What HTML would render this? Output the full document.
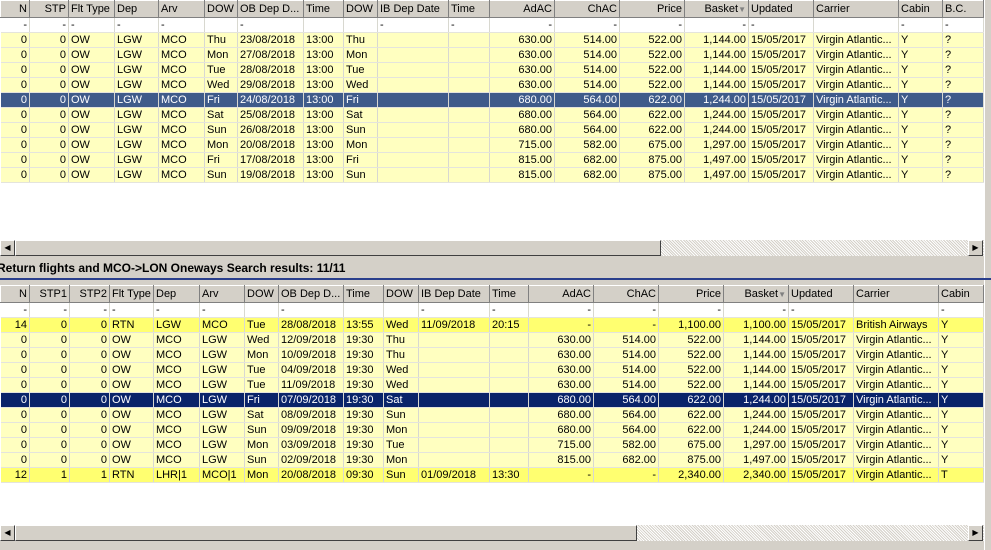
<!DOCTYPE html>
<html><head><meta charset="utf-8"><style>
*{margin:0;padding:0;box-sizing:border-box}
body{width:991px;height:550px;overflow:hidden;background:#d4d0c8;font-family:"Liberation Sans",sans-serif;font-size:11px;color:#000;position:relative}
.pane{position:absolute;left:0;width:984px;background:#fff;overflow:hidden}
table{border-collapse:collapse;table-layout:fixed;position:absolute;left:0;top:0}
td{height:15px;line-height:14px;padding:0 2px;white-space:nowrap;overflow:hidden;border-right:1px solid #d8d8d0;border-bottom:1px solid #e4e4dc}
tr.h td{height:17px;background:#d4d0c8;border-top:1px solid #fff;border-left:1px solid #fff;border-right:1px solid #808080;border-bottom:1px solid #808080;line-height:15px}
tr.f td{background:#fff}
tr.y td{background:#ffffc0}
tr.b td{background:#ffff70}
tr.s1 td{background:#3f5b8a;color:#fff}
tr.s2 td{background:#0a246a;color:#fff}
.r{text-align:right}
.sb{position:absolute;left:0;width:984px;height:16px;background-color:#e8e6e0;background-image:repeating-linear-gradient(45deg,#d4d0c8 0 1px,#fff 1px 2px)}
.btn{position:absolute;top:0;width:15px;height:16px;background:#d4d0c8;border-top:1px solid #fff;border-left:1px solid #fff;border-right:1px solid #404040;border-bottom:1px solid #404040;font-size:8px;line-height:14px;text-align:center}
.thumb{position:absolute;top:0;left:15px;height:16px;background:#d4d0c8;border-top:1px solid #fff;border-left:1px solid #fff;border-right:1px solid #404040;border-bottom:1px solid #404040}
.title{position:absolute;left:0;top:258px;width:991px;height:22px;font-weight:bold;font-size:12px;line-height:20px;padding-left:0;text-indent:-3px;border-bottom:2px solid #2a3f8c}
.edge{position:absolute;left:984px;top:0;width:7px;height:550px;background:#d4d0c8;border-left:1px solid #fff}
</style></head><body>
<div class="edge"></div>
<div class="pane" style="top:0;height:240px">
<table style="width:983px">
<colgroup><col style="width:29px"><col style="width:39px"><col style="width:46px"><col style="width:44px"><col style="width:46px"><col style="width:33px"><col style="width:66px"><col style="width:40px"><col style="width:34px"><col style="width:71px"><col style="width:41px"><col style="width:65px"><col style="width:65px"><col style="width:65px"><col style="width:64px"><col style="width:65px"><col style="width:85px"><col style="width:44px"><col style="width:41px"></colgroup>
<tr class="h"><td class="r">N</td><td class="r">STP</td><td>Flt Type</td><td>Dep</td><td>Arv</td><td>DOW</td><td>OB Dep D...</td><td>Time</td><td>DOW</td><td>IB Dep Date</td><td>Time</td><td class="r">AdAC</td><td class="r">ChAC</td><td class="r">Price</td><td class="r">Basket<span style="color:#808080;font-size:8px">▼</span></td><td>Updated</td><td>Carrier</td><td>Cabin</td><td>B.C.</td></tr>
<tr class="f"><td class="r">-</td><td class="r">-</td><td>-</td><td>-</td><td>-</td><td></td><td>-</td><td></td><td></td><td>-</td><td>-</td><td class="r">-</td><td class="r">-</td><td class="r">-</td><td class="r">-</td><td>-</td><td></td><td>-</td><td>-</td></tr>
<tr class="y"><td class="r">0</td><td class="r">0</td><td>OW</td><td>LGW</td><td>MCO</td><td>Thu</td><td>23/08/2018</td><td>13:00</td><td>Thu</td><td></td><td></td><td class="r">630.00</td><td class="r">514.00</td><td class="r">522.00</td><td class="r">1,144.00</td><td>15/05/2017</td><td>Virgin Atlantic...</td><td>Y</td><td>?</td></tr>
<tr class="y"><td class="r">0</td><td class="r">0</td><td>OW</td><td>LGW</td><td>MCO</td><td>Mon</td><td>27/08/2018</td><td>13:00</td><td>Mon</td><td></td><td></td><td class="r">630.00</td><td class="r">514.00</td><td class="r">522.00</td><td class="r">1,144.00</td><td>15/05/2017</td><td>Virgin Atlantic...</td><td>Y</td><td>?</td></tr>
<tr class="y"><td class="r">0</td><td class="r">0</td><td>OW</td><td>LGW</td><td>MCO</td><td>Tue</td><td>28/08/2018</td><td>13:00</td><td>Tue</td><td></td><td></td><td class="r">630.00</td><td class="r">514.00</td><td class="r">522.00</td><td class="r">1,144.00</td><td>15/05/2017</td><td>Virgin Atlantic...</td><td>Y</td><td>?</td></tr>
<tr class="y"><td class="r">0</td><td class="r">0</td><td>OW</td><td>LGW</td><td>MCO</td><td>Wed</td><td>29/08/2018</td><td>13:00</td><td>Wed</td><td></td><td></td><td class="r">630.00</td><td class="r">514.00</td><td class="r">522.00</td><td class="r">1,144.00</td><td>15/05/2017</td><td>Virgin Atlantic...</td><td>Y</td><td>?</td></tr>
<tr class="s1"><td class="r">0</td><td class="r">0</td><td>OW</td><td>LGW</td><td>MCO</td><td>Fri</td><td>24/08/2018</td><td>13:00</td><td>Fri</td><td></td><td></td><td class="r">680.00</td><td class="r">564.00</td><td class="r">622.00</td><td class="r">1,244.00</td><td>15/05/2017</td><td>Virgin Atlantic...</td><td>Y</td><td>?</td></tr>
<tr class="y"><td class="r">0</td><td class="r">0</td><td>OW</td><td>LGW</td><td>MCO</td><td>Sat</td><td>25/08/2018</td><td>13:00</td><td>Sat</td><td></td><td></td><td class="r">680.00</td><td class="r">564.00</td><td class="r">622.00</td><td class="r">1,244.00</td><td>15/05/2017</td><td>Virgin Atlantic...</td><td>Y</td><td>?</td></tr>
<tr class="y"><td class="r">0</td><td class="r">0</td><td>OW</td><td>LGW</td><td>MCO</td><td>Sun</td><td>26/08/2018</td><td>13:00</td><td>Sun</td><td></td><td></td><td class="r">680.00</td><td class="r">564.00</td><td class="r">622.00</td><td class="r">1,244.00</td><td>15/05/2017</td><td>Virgin Atlantic...</td><td>Y</td><td>?</td></tr>
<tr class="y"><td class="r">0</td><td class="r">0</td><td>OW</td><td>LGW</td><td>MCO</td><td>Mon</td><td>20/08/2018</td><td>13:00</td><td>Mon</td><td></td><td></td><td class="r">715.00</td><td class="r">582.00</td><td class="r">675.00</td><td class="r">1,297.00</td><td>15/05/2017</td><td>Virgin Atlantic...</td><td>Y</td><td>?</td></tr>
<tr class="y"><td class="r">0</td><td class="r">0</td><td>OW</td><td>LGW</td><td>MCO</td><td>Fri</td><td>17/08/2018</td><td>13:00</td><td>Fri</td><td></td><td></td><td class="r">815.00</td><td class="r">682.00</td><td class="r">875.00</td><td class="r">1,497.00</td><td>15/05/2017</td><td>Virgin Atlantic...</td><td>Y</td><td>?</td></tr>
<tr class="y"><td class="r">0</td><td class="r">0</td><td>OW</td><td>LGW</td><td>MCO</td><td>Sun</td><td>19/08/2018</td><td>13:00</td><td>Sun</td><td></td><td></td><td class="r">815.00</td><td class="r">682.00</td><td class="r">875.00</td><td class="r">1,497.00</td><td>15/05/2017</td><td>Virgin Atlantic...</td><td>Y</td><td>?</td></tr>
</table></div>
<div class="sb" style="top:240px"><div class="btn" style="left:0">◀</div><div class="thumb" style="width:646px"></div><div class="btn" style="left:968px">▶</div></div>
<div class="title">Return flights and MCO-&gt;LON Oneways Search results: 11/11</div>
<div class="pane" style="top:285px;height:240px">
<table style="width:983px">
<colgroup><col style="width:29px"><col style="width:40px"><col style="width:40px"><col style="width:44px"><col style="width:46px"><col style="width:45px"><col style="width:34px"><col style="width:65px"><col style="width:40px"><col style="width:35px"><col style="width:71px"><col style="width:39px"><col style="width:65px"><col style="width:65px"><col style="width:65px"><col style="width:65px"><col style="width:65px"><col style="width:85px"><col style="width:45px"></colgroup>
<tr class="h"><td class="r">N</td><td class="r">STP1</td><td class="r">STP2</td><td>Flt Type</td><td>Dep</td><td>Arv</td><td>DOW</td><td>OB Dep D...</td><td>Time</td><td>DOW</td><td>IB Dep Date</td><td>Time</td><td class="r">AdAC</td><td class="r">ChAC</td><td class="r">Price</td><td class="r">Basket<span style="color:#808080;font-size:8px">▼</span></td><td>Updated</td><td>Carrier</td><td>Cabin</td></tr>
<tr class="f"><td class="r">-</td><td class="r">-</td><td class="r">-</td><td>-</td><td>-</td><td>-</td><td></td><td>-</td><td></td><td></td><td>-</td><td>-</td><td class="r">-</td><td class="r">-</td><td class="r">-</td><td class="r">-</td><td>-</td><td></td><td>-</td></tr>
<tr class="b"><td class="r">14</td><td class="r">0</td><td class="r">0</td><td>RTN</td><td>LGW</td><td>MCO</td><td>Tue</td><td>28/08/2018</td><td>13:55</td><td>Wed</td><td>11/09/2018</td><td>20:15</td><td class="r">-</td><td class="r">-</td><td class="r">1,100.00</td><td class="r">1,100.00</td><td>15/05/2017</td><td>British Airways</td><td>Y</td></tr>
<tr class="y"><td class="r">0</td><td class="r">0</td><td class="r">0</td><td>OW</td><td>MCO</td><td>LGW</td><td>Wed</td><td>12/09/2018</td><td>19:30</td><td>Thu</td><td></td><td></td><td class="r">630.00</td><td class="r">514.00</td><td class="r">522.00</td><td class="r">1,144.00</td><td>15/05/2017</td><td>Virgin Atlantic...</td><td>Y</td></tr>
<tr class="y"><td class="r">0</td><td class="r">0</td><td class="r">0</td><td>OW</td><td>MCO</td><td>LGW</td><td>Mon</td><td>10/09/2018</td><td>19:30</td><td>Thu</td><td></td><td></td><td class="r">630.00</td><td class="r">514.00</td><td class="r">522.00</td><td class="r">1,144.00</td><td>15/05/2017</td><td>Virgin Atlantic...</td><td>Y</td></tr>
<tr class="y"><td class="r">0</td><td class="r">0</td><td class="r">0</td><td>OW</td><td>MCO</td><td>LGW</td><td>Tue</td><td>04/09/2018</td><td>19:30</td><td>Wed</td><td></td><td></td><td class="r">630.00</td><td class="r">514.00</td><td class="r">522.00</td><td class="r">1,144.00</td><td>15/05/2017</td><td>Virgin Atlantic...</td><td>Y</td></tr>
<tr class="y"><td class="r">0</td><td class="r">0</td><td class="r">0</td><td>OW</td><td>MCO</td><td>LGW</td><td>Tue</td><td>11/09/2018</td><td>19:30</td><td>Wed</td><td></td><td></td><td class="r">630.00</td><td class="r">514.00</td><td class="r">522.00</td><td class="r">1,144.00</td><td>15/05/2017</td><td>Virgin Atlantic...</td><td>Y</td></tr>
<tr class="s2"><td class="r">0</td><td class="r">0</td><td class="r">0</td><td>OW</td><td>MCO</td><td>LGW</td><td>Fri</td><td>07/09/2018</td><td>19:30</td><td>Sat</td><td></td><td></td><td class="r">680.00</td><td class="r">564.00</td><td class="r">622.00</td><td class="r">1,244.00</td><td>15/05/2017</td><td>Virgin Atlantic...</td><td>Y</td></tr>
<tr class="y"><td class="r">0</td><td class="r">0</td><td class="r">0</td><td>OW</td><td>MCO</td><td>LGW</td><td>Sat</td><td>08/09/2018</td><td>19:30</td><td>Sun</td><td></td><td></td><td class="r">680.00</td><td class="r">564.00</td><td class="r">622.00</td><td class="r">1,244.00</td><td>15/05/2017</td><td>Virgin Atlantic...</td><td>Y</td></tr>
<tr class="y"><td class="r">0</td><td class="r">0</td><td class="r">0</td><td>OW</td><td>MCO</td><td>LGW</td><td>Sun</td><td>09/09/2018</td><td>19:30</td><td>Mon</td><td></td><td></td><td class="r">680.00</td><td class="r">564.00</td><td class="r">622.00</td><td class="r">1,244.00</td><td>15/05/2017</td><td>Virgin Atlantic...</td><td>Y</td></tr>
<tr class="y"><td class="r">0</td><td class="r">0</td><td class="r">0</td><td>OW</td><td>MCO</td><td>LGW</td><td>Mon</td><td>03/09/2018</td><td>19:30</td><td>Tue</td><td></td><td></td><td class="r">715.00</td><td class="r">582.00</td><td class="r">675.00</td><td class="r">1,297.00</td><td>15/05/2017</td><td>Virgin Atlantic...</td><td>Y</td></tr>
<tr class="y"><td class="r">0</td><td class="r">0</td><td class="r">0</td><td>OW</td><td>MCO</td><td>LGW</td><td>Sun</td><td>02/09/2018</td><td>19:30</td><td>Mon</td><td></td><td></td><td class="r">815.00</td><td class="r">682.00</td><td class="r">875.00</td><td class="r">1,497.00</td><td>15/05/2017</td><td>Virgin Atlantic...</td><td>Y</td></tr>
<tr class="b"><td class="r">12</td><td class="r">1</td><td class="r">1</td><td>RTN</td><td>LHR|1</td><td>MCO|1</td><td>Mon</td><td>20/08/2018</td><td>09:30</td><td>Sun</td><td>01/09/2018</td><td>13:30</td><td class="r">-</td><td class="r">-</td><td class="r">2,340.00</td><td class="r">2,340.00</td><td>15/05/2017</td><td>Virgin Atlantic...</td><td>T</td></tr>
</table></div>
<div class="sb" style="top:525px"><div class="btn" style="left:0">◀</div><div class="thumb" style="width:622px"></div><div class="btn" style="left:968px">▶</div></div>
</body></html>
